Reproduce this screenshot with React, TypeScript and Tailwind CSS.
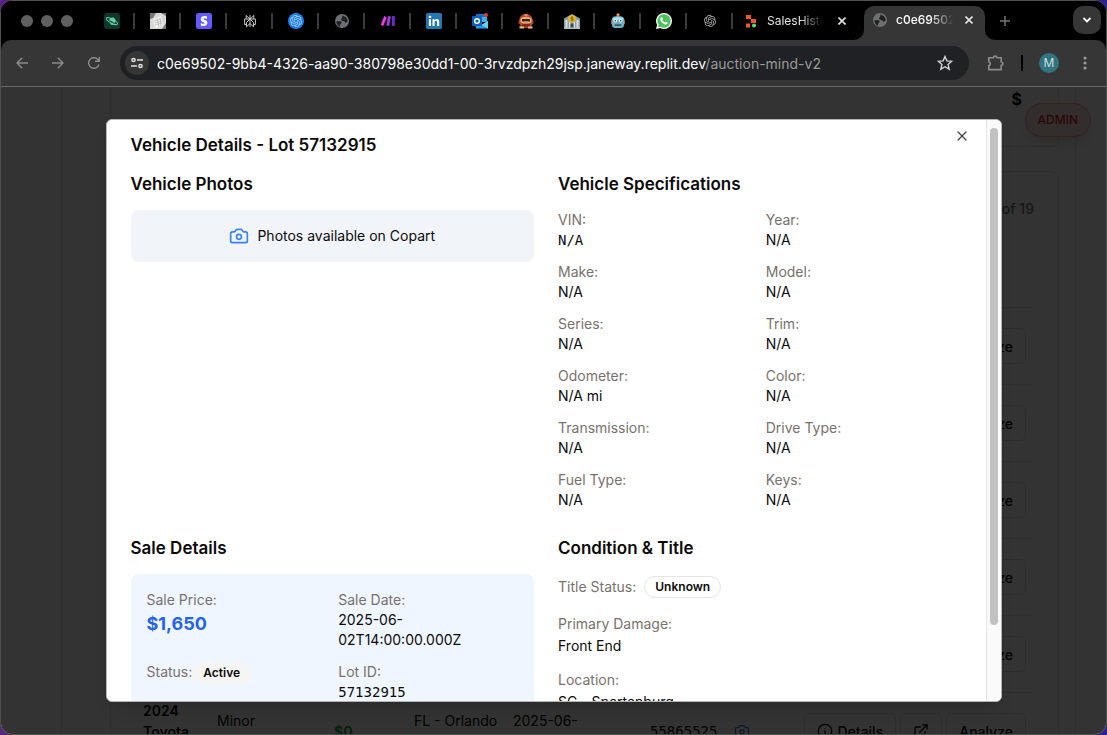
import React from "react";
import { Camera, ExternalLink, Info, X } from "lucide-react";
import { SiOpenai } from "react-icons/si";

function Globe() {
  return (
    <svg viewBox="0 0 16 16" className="size-4 shrink-0" aria-hidden="true">
      <circle cx="8" cy="8" r="7" fill="#6d6f73" />
      <path d="M2.500 8.200h4c1.100 0 1.400 1.200.8 2L6 11.800v2L4.200 12.700 2.500 10z" fill="#202124" />
      <path d="M8.500 2.600l3.500 1.600 1.500 2.600v2l-2 1.200L10.200 8.200 8 7.800 6.800 6.200 8 5z" fill="#202124" />
    </svg>
  );
}

const favicons: { name: string; icon: React.ReactNode }[] = [
  {
    name: "Planet",
    icon: (
      <svg viewBox="0 0 16 16" className="size-4">
        <rect width="16" height="16" rx="3" fill="#12352c" />
        <path d="M5 7.500a3.300 3.300 0 0 1 6-1.500c1 1.600.7 3.500-.5 4.700z" fill="#5fd6a4" />
        <path d="M5.500 9.800l4 2c-1.500.6-3.300 0-4-2z" fill="#5fd6a4" />
        <ellipse cx="8" cy="8.200" rx="6.200" ry="2" transform="rotate(28 8 8)" fill="none" stroke="#5fd6a4" />
        <path d="M5.500 7.500l5.500 3" stroke="#12352c" strokeWidth=".8" />
      </svg>
    ),
  },
  {
    name: "Documents",
    icon: (
      <svg viewBox="0 0 16 16" className="size-4">
        <rect width="16" height="16" fill="#d8d8d6" />
        <path d="M0 0h6L3 5 0 6zM11 0h5v3zM14 13l2-3v6h-4z" fill="#777" />
        <path d="M3 6l8-3 2 10-8 2z" fill="#f1f1ef" />
        <path d="M4 8l7-2M5 10l7-2M5 12l7-2M7 5l2 9M10 5l1 8" stroke="#aaa" strokeWidth=".6" />
      </svg>
    ),
  },
  {
    name: "Stripe",
    icon: (
      <svg viewBox="0 0 16 16" className="size-4">
        <rect width="16" height="16" rx="2.500" fill="#635bff" />
        <path
          d="M11 3.600V6C10.100 5.500 9.200 5.300 8.500 5.300c-.6 0-1 .2-1 .6 0 1.200 3.900.7 3.900 3.900 0 2-1.500 3.200-3.700 3.200-.9 0-1.900-.2-2.900-.6V9.900c.9.500 2 .9 2.800.9.6 0 1-.2 1-.6C8.600 8.900 4.800 9.500 4.800 6.300c0-2 1.400-3.200 3.600-3.200.9 0 1.700.2 2.600.5z"
          fill="#fff"
        />
      </svg>
    ),
  },
  {
    name: "Perplexity",
    icon: (
      <svg viewBox="0 0 16 16" className="size-4" fill="none" stroke="#c9c9c9" strokeWidth="1">
        <path d="M8 2v12M8 6L4.200 2.500V6M8 6l3.800-3.500V6M4.500 11.500H2.600V6h10.800v5.500h-1.900M8 6L4.500 9.500v4.200L8 10.500M8 6l3.500 3.500v4.200L8 10.500" />
      </svg>
    ),
  },
  {
    name: "Assistant",
    icon: (
      <span className="flex size-4 items-center justify-center rounded-full bg-[#1a7ef0] text-[12px] text-[#a9d2ff]">
        <SiOpenai />
      </span>
    ),
  },
  { name: "Website", icon: <Globe /> },
  {
    name: "Make",
    icon: (
      <svg viewBox="0 0 16 16" className="size-4">
        <path d="M4.200 3l2.500 1.200L3.400 13l-2.600-1.200z" fill="#e83ce4" />
        <path d="M8 3l2.900.5L9.200 13l-2.900-.5z" fill="#a336e0" />
        <path d="M12 3h2.800v10H12z" fill="#6a2bc9" />
      </svg>
    ),
  },
  {
    name: "LinkedIn",
    icon: (
      <svg viewBox="0 0 16 16" className="size-4">
        <rect width="16" height="16" rx="1.500" fill="#2277b5" />
        <g fill="#fff">
          <circle cx="4" cy="4" r="1.300" />
          <path d="M2.900 6.200H5V13H2.900zM6.500 6.200h2v1c.5-.8 1.200-1.200 2.200-1.200 1.900 0 2.500 1.200 2.500 3.100V13h-2.100V9.500c0-1-.3-1.700-1.100-1.700-1 0-1.400.7-1.400 1.700V13H6.500z" />
        </g>
      </svg>
    ),
  },
  {
    name: "Outlook",
    icon: (
      <svg viewBox="0 0 16 16" className="size-4">
        <path d="M4 1h11v8H4z" fill="#1b6fc4" />
        <path d="M9 4h6v5H9z" fill="#38b2ee" />
        <path d="M3 8l7 4 6-4v7.500H4z" fill="#2a9be6" />
        <path d="M16 8v7.500L9 12z" fill="#5fd0f6" />
        <rect y="3" width="10" height="10" rx="1" fill="#0f5fb8" />
        <circle cx="5" cy="8" r="2.300" fill="none" stroke="#fff" strokeWidth="1.400" />
        <circle cx="14" cy="2" r="2" fill="#e5383b" />
      </svg>
    ),
  },
  {
    name: "Mascot",
    icon: (
      <svg viewBox="0 0 16 16" className="size-4">
        <path d="M1.500 6C2 3 5 .8 8 .8S14 3 14.500 6l1.200 4-2.200 2 .5 3H2l.5-3-2.200-2z" fill="#b8482a" />
        <path d="M2.500 6c1.500-3 9.500-3 11 0v3c-1 2-10 2-11 0z" fill="#e9ae72" />
        <path d="M4 6h8v2.500H4z" fill="#3b1d16" />
        <path d="M6.500 8h3v1.500h-3z" fill="#c98a55" />
        <path d="M4 11h8v3H4z" fill="#7d2a1b" />
        <path d="M1.500 13.500H6v2H1.500zM10 13.500h4.500v2H10z" fill="#e9b98a" />
        <path d="M6.500 1.500h3v1.200h-3z" fill="#e9ae72" />
      </svg>
    ),
  },
  {
    name: "Bank",
    icon: (
      <svg viewBox="0 0 16 16" className="size-4">
        <path d="M0 5.500L8 1l8 4.500V15H0z" fill="#8d9ca5" />
        <path d="M1.500 7h2v8h-2zM5 9h1.500v6H5zM9.500 9H11v6H9.500zM12.500 7h2v8h-2z" fill="#d5dee2" />
        <path d="M6.500 10.500h3V15h-3z" fill="#3c4a52" />
        <path d="M0 14.500h16V16H0z" fill="#b4c0c5" />
        <circle cx="8" cy="5.800" r="3.900" fill="#e7b52c" />
        <path d="M9.500 4.600c-1-.7-2.800-.4-2.800.5 0 1.200 2.700.4 2.700 1.600 0 .9-1.800 1.200-2.800.4M8 3.400v5" stroke="#6b4f08" strokeWidth=".7" fill="none" />
      </svg>
    ),
  },
  {
    name: "Robot",
    icon: (
      <svg viewBox="0 0 16 16" className="size-4">
        <circle cx="8" cy="1.800" r="1.600" fill="#ef9a3c" />
        <rect x="1" y="6.500" width="14" height="5" rx="1" fill="#b0605d" />
        <path d="M2 6c0-2 2-3 6-3s6 1 6 3v6c0 2-1.500 3-3 3H5c-1.500 0-3-1-3-3z" fill="#6fb3c4" />
        <path d="M2.500 5.500c2-2 9-2 11 0L13 7H3z" fill="#a6dbe8" />
        <circle cx="5.300" cy="7.800" r="1.700" fill="#eafcff" />
        <circle cx="10.700" cy="7.800" r="1.700" fill="#eafcff" />
        <circle cx="5.300" cy="7.800" r=".8" fill="#223344" />
        <circle cx="10.700" cy="7.800" r=".8" fill="#223344" />
        <path d="M7.200 10.300L8 8.800l.8 1.500z" fill="#d0504d" />
        <rect x="4.500" y="11.300" width="7" height="1.700" rx=".8" fill="#2f5964" />
      </svg>
    ),
  },
  {
    name: "WhatsApp",
    icon: (
      <svg viewBox="0 0 16 16" className="size-4">
        <path d="M8 0a8 8 0 0 1 0 16c-1.400 0-2.700-.3-3.800-1L0 16l1.100-4A8 8 0 0 1 8 0z" fill="#fff" />
        <path d="M8 1.300a6.700 6.700 0 0 1 0 13.400c-1.300 0-2.400-.3-3.400-1L1.900 14.300l.7-2.600A6.700 6.700 0 0 1 8 1.300z" fill="#4cc35a" />
        <path
          d="M5.200 4.300c.5-.4.900-.2 1.100.2l.6 1.400c.1.400-.5.900-.6 1.100.6 1.200 1.500 2 2.700 2.500.3 0 .8-.9 1.100-.8l1.500.8c.3.200.1 1-.2 1.300-.6.6-1.500.9-2.500.6-2.200-.7-3.900-2.400-4.500-4.300-.3-1.200.1-2.200.8-2.800z"
          fill="#fff"
        />
      </svg>
    ),
  },
  {
    name: "ChatGPT",
    icon: (
      <span className="flex size-4 items-center justify-center text-[12px] text-[#b0b0b0]">
        <SiOpenai />
      </span>
    ),
  },
];

const specs = [
  ["VIN:", "N/A"],
  ["Year:", "N/A"],
  ["Make:", "N/A"],
  ["Model:", "N/A"],
  ["Series:", "N/A"],
  ["Trim:", "N/A"],
  ["Odometer:", "N/A mi"],
  ["Color:", "N/A"],
  ["Transmission:", "N/A"],
  ["Drive Type:", "N/A"],
  ["Fuel Type:", "N/A"],
  ["Keys:", "N/A"],
];

const mono = "font-['DejaVu_Sans_Mono',monospace]";
const muted = "text-[#78716c]";

function CloseGlyph() {
  return (
    <svg viewBox="0 0 8 8" className="size-2" stroke="#e3e3e3" strokeWidth="1.600" aria-hidden="true">
      <path d="M.5.5l7 7M7.500.5l-7 7" />
    </svg>
  );
}

function TabStrip() {
  return (
    <header className="flex h-[39px] shrink-0 items-stretch bg-black">
      <div className="flex w-[88px] shrink-0 items-center gap-2 pl-5">
        <span className="size-3 rounded-full bg-[#606060]" />
        <span className="size-3 rounded-full bg-[#606060]" />
        <span className="size-3 rounded-full bg-[#606060]" />
      </div>
      {favicons.map((f) => (
        <button key={f.name} aria-label={f.name} className="flex w-[46px] shrink-0 items-center justify-center">
          <span className="flex flex-1 justify-center">{f.icon}</span>
          <span className="-ml-0.5 h-4 w-0.5 bg-[#3a3a3a]" />
        </button>
      ))}
      <div className="flex w-[121px] shrink-0 items-center pl-3">
        <svg viewBox="0 0 12 14" className="h-[14px] w-3 shrink-0" aria-hidden="true">
          <path d="M1 1h5v4H1zM6 5h5v4H6zM1 9.500h4v4H1z" fill="#f1592a" />
          <circle cx="9" cy="11.500" r="2" fill="#4fe07c" />
        </svg>
        <span className="ml-2.5 w-14 overflow-hidden text-[12px] whitespace-nowrap text-[#e3e3e3] [mask-image:linear-gradient(to_right,black_60%,transparent)]">
          SalesHistory
        </span>
        <button aria-label="Close SalesHistory" className="ml-auto p-2">
          <CloseGlyph />
        </button>
      </div>
      <svg viewBox="0 0 10 10" className="size-2.5 shrink-0 self-end" fill="#363636" aria-hidden="true">
        <path d="M10 0v10H0A10 10 0 0 0 10 0z" />
      </svg>
      <div className="mt-[5px] flex w-[121px] shrink-0 items-center rounded-t-[10px] bg-[#363636] pb-1.5 pl-2">
        <Globe />
        <span className="ml-2 w-[57px] overflow-hidden text-[12px] font-medium whitespace-nowrap text-white [mask-image:linear-gradient(to_right,black_60%,transparent)]">
          c0e69502-9bb4
        </span>
        <button aria-label="Close c0e69502" className="ml-auto p-2 pr-3">
          <CloseGlyph />
        </button>
      </div>
      <svg viewBox="0 0 10 10" className="size-2.5 shrink-0 self-end" fill="#363636" aria-hidden="true">
        <path d="M0 0v10h10A10 10 0 0 1 0 0z" />
      </svg>
      <button aria-label="New tab" className="ml-0.5 flex w-4 items-center justify-center">
        <svg viewBox="0 0 12 12" className="size-3" stroke="#757575" strokeWidth="1.500">
          <path d="M6 1v10M1 6h10" />
        </svg>
      </button>
      <button
        aria-label="Search tabs"
        className="mt-[5px] mr-[5px] ml-auto flex size-7 items-center justify-center rounded-[10px] bg-[#363636]"
      >
        <svg viewBox="0 0 10 10" className="size-2.5" fill="none" stroke="#fff" strokeWidth="1.800">
          <path d="M1.500 3l3.500 3.500L8.500 3" />
        </svg>
      </button>
    </header>
  );
}

function Toolbar() {
  return (
    <div className="bg-black">
      <div className="flex h-[46px] items-center rounded-t-[10px] bg-[#363636]">
        <nav className="flex w-[119px] shrink-0 items-center gap-6 pl-[15px]" aria-label="History">
          <button aria-label="Back">
            <svg viewBox="0 0 12 12" className="size-3" fill="none" stroke="#8b8b8b" strokeWidth="1.400">
              <path d="M12 6H1M6.200.8L1 6l5.200 5.200" />
            </svg>
          </button>
          <button aria-label="Forward">
            <svg viewBox="0 0 12 12" className="size-3" fill="none" stroke="#8b8b8b" strokeWidth="1.400">
              <path d="M0 6h11M5.800.8L11 6l-5.200 5.200" />
            </svg>
          </button>
          <button aria-label="Reload">
            <svg viewBox="0 0 12 12" className="size-3" fill="none" stroke="#8b8b8b" strokeWidth="1.400">
              <path d="M11 7.500A5.300 5.300 0 1 1 10.300 3L11 4M11.300 0v4.300H7" />
            </svg>
          </button>
        </nav>
        <div className="flex h-[34px] min-w-0 flex-1 items-center rounded-full bg-[#202124] pr-4 pl-[5px]">
          <button aria-label="Site information" className="flex size-6 items-center justify-center rounded-full bg-[#363636]">
            <svg viewBox="0 0 12 12" className="size-3" fill="none" stroke="#e3e3e3" strokeWidth="1.500">
              <circle cx="2.500" cy="3" r="1.600" />
              <path d="M6 3h6M0 9h6" />
              <circle cx="9.500" cy="9" r="1.600" />
            </svg>
          </button>
          <p className="ml-2 flex-1 text-[14px] whitespace-nowrap text-[#9a9a9a]">
            <span className="text-white">
              c0e69502-9bb4-4326-aa90-380798e30dd1-00-3rvzdpzh29jsp.janeway.replit.dev
            </span>
            /auction-mind-v2
          </p>
          <button aria-label="Bookmark">
            <svg viewBox="0 0 16 16" className="size-4" fill="none" stroke="#d0d0d0" strokeWidth="1.400">
              <path d="M8 1.500l1.900 4.400 4.800.4-3.600 3.200 1.100 4.700L8 11.700l-4.200 2.500 1.100-4.700L1.300 6.300l4.800-.4z" />
            </svg>
          </button>
        </div>
        <div className="flex w-[137px] shrink-0 items-center pl-[18px]">
          <button aria-label="Extensions">
            <svg viewBox="0 0 18 18" className="size-[18px]" fill="none" stroke="#8b8b8b" strokeWidth="1.600">
              <path d="M1.800 3.800h4.700a1.700 1.700 0 0 1 3.400 0h4.300V8a1.700 1.700 0 0 1 0 3.400v4.200H1.800v-4a2 2 0 0 0 0-3.900z" />
            </svg>
          </button>
          <span className="ml-4 h-4 w-0.5 bg-black" />
          <button className="ml-4 size-5 rounded-full bg-[#32757f] text-[12px] text-[#c9dfe2]">M</button>
          <button aria-label="Menu" className="ml-6">
            <svg viewBox="0 0 4 14" className="h-[14px] w-1" fill="#9a9a9a">
              <circle cx="2" cy="2" r="1.600" />
              <circle cx="2" cy="7" r="1.600" />
              <circle cx="2" cy="12" r="1.600" />
            </svg>
          </button>
        </div>
      </div>
    </div>
  );
}

const outline = "flex h-9 items-center rounded-md border border-[#e2e2e2] px-3";

function AuctionPage() {
  return (
    <div className="h-full overflow-hidden bg-white text-[14px] text-[#0c0a09]">
      <main className="mr-[30px] ml-[60px] border-x border-[#e7e5e4] pr-4 pl-12">
        <section className="flex h-[60px] justify-end rounded-b-lg border border-t-0 border-[#e7e5e4] pr-9">
          <span className="text-[16px] font-bold">$</span>
        </section>
        <section className="mt-6 rounded-lg border border-[#e7e5e4] px-6">
          <div className="flex h-[135px] justify-end pt-[26px] font-medium text-[#78716c]">Page 1 of 19</div>
          <table className="w-full table-fixed border-collapse">
            <colgroup>
              <col className="w-[74px]" />
              <col className="w-[117px]" />
              <col className="w-[80px]" />
              <col className="w-[99px]" />
              <col />
              <col className="w-[86px]" />
              <col className="w-[70px]" />
              <col className="w-[236px]" />
            </colgroup>
            <tbody>
              {[1, 2, 3, 4, 5].map((n) => (
                <tr key={n} className="h-[77px] border-t border-[#e7e5e4]">
                  <td colSpan={7} />
                  <td className="px-2">
                    <div className="flex justify-end">
                      <button className={outline + " font-medium"}>Analyze</button>
                    </div>
                  </td>
                </tr>
              ))}
              <tr className="h-[77px] border-t border-[#e7e5e4]">
                <td className="px-2 font-semibold">2024 Toyota Camry</td>
                <td className="px-2">
                  Minor
                  <br />
                  Dents
                </td>
                <td className="px-2 font-bold text-[#16a34a]">$0</td>
                <td className="px-2 whitespace-nowrap">
                  FL - Orlando
                  <br />
                  North
                </td>
                <td className="px-2">
                  2025-06-
                  <br />
                  02
                </td>
                <td className={mono + " px-2"}>55865525</td>
                <td className="px-1.5">
                  <Camera className="size-4 text-[#3b82f6]" />
                </td>
                <td className="px-2">
                  <div className="flex justify-end gap-1 font-medium">
                    <button className={outline + " gap-1"}>
                      <Info className="size-4" />
                      Details
                    </button>
                    <button className={outline} aria-label="Open listing">
                      <ExternalLink className="size-4" />
                    </button>
                    <button className={outline}>Analyze</button>
                  </div>
                </td>
              </tr>
            </tbody>
          </table>
        </section>
      </main>
      <button className="absolute top-4 right-[15px] h-[34px] rounded-full border border-[#fca5a5] bg-[#fee2e2] px-3 text-[12px] font-medium text-[#dc2626] shadow-lg">
        ADMIN
      </button>
    </div>
  );
}

function VehicleDialog() {
  const heading = "mb-3 text-[17px] leading-7 font-semibold";
  return (
    <div
      role="dialog"
      aria-labelledby="dialog-title"
      className="relative flex h-[90%] w-full max-w-4xl overflow-hidden rounded-md border border-[#b5b5b5] bg-white text-[14px] leading-5 text-[#0c0a09] shadow-lg"
    >
      <div className="min-w-0 flex-1 overflow-y-auto px-6 pt-4 pb-6 [scrollbar-width:none]">
        <h2 id="dialog-title" className="mb-4 text-[17px] leading-[18px] font-semibold">
          Vehicle Details - Lot 57132915
        </h2>
        <div className="grid grid-cols-2 gap-6">
          <section>
            <h3 className={heading}>Vehicle Photos</h3>
            <div className="flex h-[52px] items-center justify-center gap-2 rounded-lg bg-[#f1f5f9]">
              <Camera className="size-5 text-[#3b82f6]" />
              Photos available on Copart
            </div>
          </section>
          <section>
            <h3 className={heading}>Vehicle Specifications</h3>
            <dl className="grid grid-cols-2 gap-3">
              {specs.map(([label, value]) => (
                <div key={label}>
                  <dt className={muted}>{label}</dt>
                  <dd className={label === "VIN:" ? mono : ""}>{value}</dd>
                </div>
              ))}
            </dl>
          </section>
          <section>
            <h3 className={heading}>Sale Details</h3>
            <dl className="grid grid-cols-2 gap-3 rounded-lg bg-[#eff6ff] p-4">
              <div>
                <dt className={muted}>Sale Price:</dt>
                <dd className="text-[18px] leading-7 font-bold text-[#2563eb]">$1,650</dd>
              </div>
              <div>
                <dt className={muted}>Sale Date:</dt>
                <dd>2025-06-02T14:00:00.000Z</dd>
              </div>
              <div className="flex items-start">
                <dt className={muted}>Status:</dt>
                <dd className="rounded-full border border-transparent bg-[#f5f5f4] px-2.5 py-0.5 text-[12px] leading-4 font-semibold">
                  Active
                </dd>
              </div>
              <div>
                <dt className={muted}>Lot ID:</dt>
                <dd className={mono}>57132915</dd>
              </div>
            </dl>
          </section>
          <section>
            <h3 className={heading}>Condition &amp; Title</h3>
            <dl className="space-y-3">
              <div className="flex h-[26px] items-center gap-2">
                <dt className={muted}>Title Status:</dt>
                <dd className="rounded-full border border-[#e7e5e4] px-2.5 py-0.5 text-[12px] leading-4 font-semibold">
                  Unknown
                </dd>
              </div>
              <div>
                <dt className={"leading-6 " + muted}>Primary Damage:</dt>
                <dd>Front End</dd>
              </div>
              <div>
                <dt className={"leading-6 " + muted}>Location:</dt>
                <dd>SC - Spartanburg</dd>
              </div>
            </dl>
          </section>
        </div>
      </div>
      <div className="flex w-[15px] shrink-0 justify-center border-l border-[#e5e5e5] bg-[#fafafa] py-2">
        <span className="h-[88%] w-2 rounded-full bg-[#c1c1c1]" />
      </div>
      <button aria-label="Close" className="absolute top-2 right-[31px] text-[#444]">
        <X className="size-4" strokeWidth={1.8} />
      </button>
    </div>
  );
}

export default function App() {
  return (
    <div className="h-screen overflow-hidden bg-linear-to-r from-[#5b2482] to-[#2f1f96] font-['Inter','Liberation_Sans',sans-serif]">
      <div className="flex h-full flex-col overflow-hidden rounded-xl border border-[#505050] bg-black">
        <TabStrip />
        <Toolbar />
        <div className="relative min-h-0 flex-1 border-t border-[#6a6a6a]">
          <AuctionPage />
          <div className="absolute inset-0 flex items-center justify-center bg-black/80">
            <VehicleDialog />
          </div>
        </div>
      </div>
    </div>
  );
}
